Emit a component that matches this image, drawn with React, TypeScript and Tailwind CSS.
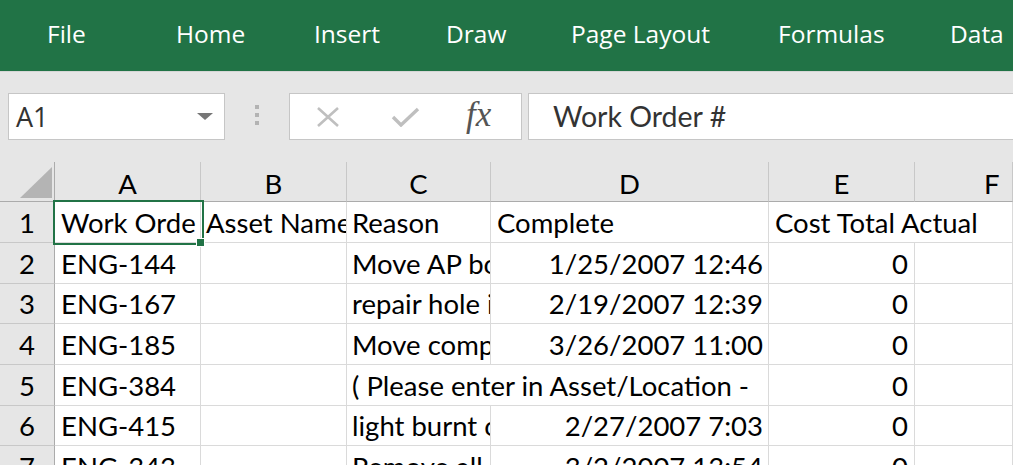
import React from "react";

const tabs = [
  { label: "File", w: "w-[129px]" },
  { label: "Home", w: "w-[138px]" },
  { label: "Insert", w: "w-[132px]" },
  { label: "Draw", w: "w-[125px]" },
  { label: "Page Layout", w: "w-[207px]" },
  { label: "Formulas", w: "w-[172px]" },
  { label: "Data", w: "w-[80px]" },
];

type Row = { n: number; a: string; b: string; c: string; d: string; e: string; span?: boolean };

const rows: Row[] = [
  { n: 2, a: "ENG-144", b: "", c: "Move AP board", d: "1/25/2007 12:46", e: "0" },
  { n: 3, a: "ENG-167", b: "", c: "repair hole in wall", d: "2/19/2007 12:39", e: "0" },
  { n: 4, a: "ENG-185", b: "", c: "Move computer", d: "3/26/2007 11:00", e: "0" },
  { n: 5, a: "ENG-384", b: "", c: "( Please enter in Asset/Location - ", d: "", e: "0", span: true },
  { n: 6, a: "ENG-415", b: "", c: "light burnt out", d: "2/27/2007 7:03", e: "0" },
  { n: 7, a: "ENG-343", b: "", c: "Remove all", d: "3/2/2007 13:54", e: "0" },
];

const cellFont = "font-['Lato',sans-serif] text-[27.5px] leading-none text-black";
const cellBase =
  "border-r border-b border-[#dadada] bg-white overflow-hidden whitespace-nowrap flex items-end pb-[6px]";
const colHead =
  "border-r border-b border-[#c8c8c8] border-b-[#ababab] bg-[#e6e6e6] flex items-center justify-center pt-[4px] " +
  cellFont;
const rowHead =
  "border-r border-b border-[#c8c8c8] border-r-[#ababab] bg-[#e6e6e6] flex items-end justify-center pb-[6px] " +
  cellFont;

export default function App() {
  return (
    <div className="w-[1013px] h-[465px] overflow-hidden bg-white relative">
      {/* Ribbon tabs */}
      <div className="h-[71px] bg-[#217346] flex items-center pl-[47px] pb-[2px]">
        {tabs.map((t) => (
          <div
            key={t.label}
            className={`${t.w} shrink-0 text-white font-['Open_Sans',sans-serif] text-[24.5px] leading-none`}
          >
            {t.label}
          </div>
        ))}
      </div>

      {/* Formula bar */}
      <div className="h-[91px] bg-[#e6e6e6] border-t border-[#d6d6d6] flex items-start pt-[21px] pl-[8px]">
        <div className="w-[217px] h-[47px] shrink-0 bg-white border border-[#c6c6c6] flex items-center justify-between pl-[7px] pr-[11px]">
          <span className="font-['Open_Sans',sans-serif] text-[27px] leading-none text-[#333]">A1</span>
          <svg width="16" height="8" viewBox="0 0 16 8">
            <polygon points="0,0 16,0 8,7" fill="#777" />
          </svg>
        </div>
        <div className="ml-[30px] mt-[12px] flex flex-col gap-[4px] shrink-0">
          <div className="w-[4px] h-[4px] bg-[#b3b3b3]" />
          <div className="w-[4px] h-[4px] bg-[#b3b3b3]" />
          <div className="w-[4px] h-[4px] bg-[#b3b3b3]" />
        </div>
        <div className="ml-[30px] w-[233px] h-[47px] shrink-0 bg-white border border-[#c6c6c6] flex items-center">
          <svg className="ml-[26px]" width="24" height="20" viewBox="0 0 24 20">
            <path d="M2 1 L22 19 M22 1 L2 19" stroke="#bfbfbf" strokeWidth="2.6" fill="none" />
          </svg>
          <svg className="ml-[51px]" width="29" height="20" viewBox="0 0 29 20">
            <path d="M2 10 L10 18 L27 2" stroke="#bfbfbf" strokeWidth="3.4" fill="none" />
          </svg>
          <span className="ml-[46px] font-['Liberation_Serif',serif] italic text-[35px] leading-none text-[#555] -mt-[4px]">
            fx
          </span>
        </div>
        <div className="ml-[6px] flex-1 h-[47px] bg-white border border-[#c6c6c6] border-r-0 flex items-center pl-[24px]">
          <span className="font-['Lato',sans-serif] text-[28.5px] leading-none text-[#333]">Work Order #</span>
        </div>
      </div>

      {/* Grid */}
      <div className="relative">
        <div className="grid grid-cols-[55px_146px_146px_144px_278px_146px_1fr] grid-rows-[40px_41px_41px_40px_41px_41px_40px_41px]">
          {/* header row */}
          <div className="bg-[#e6e6e6] border-r border-b border-[#ababab] relative">
            <svg className="absolute left-[20px] top-[5px]" width="33" height="32" viewBox="0 0 33 32">
              <polygon points="32,0 32,31 0,31" fill="#b4b4b4" />
            </svg>
          </div>
          <div className={colHead + " bg-[#d2d2d2] text-[#217346]"}>A</div>
          <div className={colHead}>B</div>
          <div className={colHead}>C</div>
          <div className={colHead}>D</div>
          <div className={colHead}>E</div>
          <div className={colHead + " justify-start pl-[69px]"}>F</div>

          {/* row 1 */}
          <div className={rowHead + " bg-[#d2d2d2] text-[#217346]"}>1</div>
          <div className={cellBase + " pl-[6px] " + cellFont}>Work Orde</div>
          <div className={cellBase + " pl-[5px] " + cellFont}>Asset Name</div>
          <div className={cellBase + " pl-[5px] " + cellFont}>Reason</div>
          <div className={cellBase + " pl-[6px] " + cellFont}>Complete</div>
          <div className={cellBase + " pl-[6px] overflow-visible border-r-0 z-10 " + cellFont}>Cost Total Actual</div>
          <div className={cellBase} />

          {rows.map((r) => (
            <React.Fragment key={r.n}>
              <div className={rowHead}>{r.n}</div>
              <div className={cellBase + " pl-[6px] " + cellFont}>{r.a}</div>
              <div className={cellBase + " " + cellFont}>{r.b}</div>
              {r.span ? (
                <div className={cellBase + " col-span-2 pl-[5px] " + cellFont}>{r.c}</div>
              ) : (
                <>
                  <div className={cellBase + " pl-[5px] " + cellFont}>{r.c}</div>
                  <div className={cellBase + " justify-end pr-[5px] " + cellFont}>{r.d}</div>
                </>
              )}
              <div className={cellBase + " justify-end pr-[6px] " + cellFont}>{r.e}</div>
              <div className={cellBase} />
            </React.Fragment>
          ))}
        </div>

        {/* active cell selection */}
        <div className="absolute left-[53px] top-[38px] w-[151px] h-[45px] border-2 border-[#217346] pointer-events-none" />
        <div className="absolute left-[196px] top-[76px] w-[9px] h-[9px] bg-[#217346] border border-white" />
      </div>
    </div>
  );
}
